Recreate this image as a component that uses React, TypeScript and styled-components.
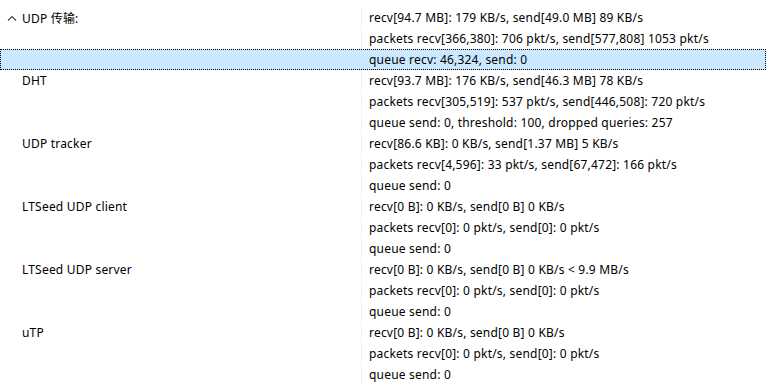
import React, { JSX } from 'react';
import styled, { createGlobalStyle } from 'styled-components';

const GlobalStyle = createGlobalStyle`
  html, body {
    margin: 0;
    padding: 0;
    background: #ffffff;
  }
  body {
    font-family: "Noto Sans", "Noto Sans CJK SC", sans-serif;
    font-size: 12px;
    letter-spacing: 0.2px;
    color: #000000;
  }
`;

const Tree = styled.div`
  width: 766px;
  height: 385px;
  padding-top: 7px;
  box-sizing: border-box;
  overflow: hidden;
`;

const Row = styled.div<{ $selected?: boolean }>`
  display: grid;
  grid-template-columns: 360px 1fr;
  height: 21px;
  box-sizing: border-box;
  background: ${(p) => (p.$selected ? '#cce8ff' : 'transparent')};
  border: 1px dotted ${(p) => (p.$selected ? '#000000' : 'transparent')};
`;

const NameCell = styled.div`
  display: flex;
  align-items: center;
  padding-left: 21px;
  position: relative;
  white-space: nowrap;
`;

const ValueCell = styled.div<{ $selected?: boolean }>`
  display: flex;
  align-items: center;
  padding-left: 7px;
  border-left: 1px solid ${(p) => (p.$selected ? 'transparent' : '#f0f0f0')};
  white-space: nowrap;
`;

const Chevron = styled.svg`
  position: absolute;
  left: 6px;
  top: 6px;
  width: 10px;
  height: 8px;
`;

type TGroup = {
	name: string;
	expandable?: boolean;
	lines: string[];
};

const groups: TGroup[] = [
	{
		name: 'UDP 传输:',
		expandable: true,
		lines: [
			'recv[94.7 MB]: 179 KB/s, send[49.0 MB] 89 KB/s',
			'packets recv[366,380]: 706 pkt/s, send[577,808] 1053 pkt/s',
			'queue recv: 46,324, send: 0',
		],
	},
	{
		name: 'DHT',
		lines: [
			'recv[93.7 MB]: 176 KB/s, send[46.3 MB] 78 KB/s',
			'packets recv[305,519]: 537 pkt/s, send[446,508]: 720 pkt/s',
			'queue send: 0, threshold: 100, dropped queries: 257',
		],
	},
	{
		name: 'UDP tracker',
		lines: [
			'recv[86.6 KB]: 0 KB/s, send[1.37 MB] 5 KB/s',
			'packets recv[4,596]: 33 pkt/s, send[67,472]: 166 pkt/s',
			'queue send: 0',
		],
	},
	{
		name: 'LTSeed UDP client',
		lines: [
			'recv[0 B]: 0 KB/s, send[0 B] 0 KB/s',
			'packets recv[0]: 0 pkt/s, send[0]: 0 pkt/s',
			'queue send: 0',
		],
	},
	{
		name: 'LTSeed UDP server',
		lines: [
			'recv[0 B]: 0 KB/s, send[0 B] 0 KB/s < 9.9 MB/s',
			'packets recv[0]: 0 pkt/s, send[0]: 0 pkt/s',
			'queue send: 0',
		],
	},
	{
		name: 'uTP',
		lines: [
			'recv[0 B]: 0 KB/s, send[0 B] 0 KB/s',
			'packets recv[0]: 0 pkt/s, send[0]: 0 pkt/s',
			'queue send: 0',
		],
	},
];

const SELECTED = '0-2';

function App(): JSX.Element {
	return (
		<>
			<GlobalStyle />
			<Tree>
				{groups.map((group: TGroup, gi: number) =>
					group.lines.map((line: string, li: number) => {
						const selected = `${gi}-${li}` === SELECTED;
						return (
							<Row key={`${gi}-${li}`} $selected={selected}>
								<NameCell>
									{li === 0 && group.expandable &&
										<Chevron viewBox="0 0 10 8">
											<polyline points="1,6.5 5,2.5 9,6.5" fill="none" stroke="#404040" strokeWidth="1.1"/>
										</Chevron>
									}
									{li === 0 ? group.name : ''}
								</NameCell>
								<ValueCell $selected={selected}>{line}</ValueCell>
							</Row>
						);
					})
				)}
			</Tree>
		</>
	);
}

export default App;
